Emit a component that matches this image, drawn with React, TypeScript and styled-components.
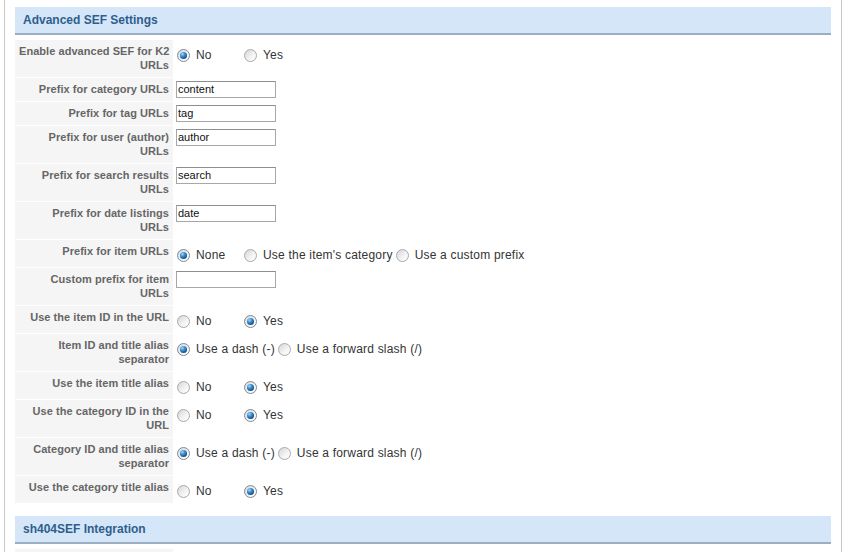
import React from "react";
import styled, { createGlobalStyle } from "styled-components";

const GlobalStyle = createGlobalStyle`
  html, body { margin: 0; padding: 0; background: #ffffff; }
  body { font-family: "Liberation Sans", Arial, sans-serif; }
`;

const Page = styled.div`
  margin-left: 4px;
  min-height: 552px;
  border-left: 1px solid #c9c9c9;
  border-right: 1px solid #c9c9c9;
  padding: 7px 10px 0 10px;
  box-sizing: content-box;
  width: 816px;
`;

const SectionHeader = styled.div<{ $gapBefore: number; $gapAfter: number }>`
  height: 26px;
  background: #d5e6f8;
  border-bottom: 2px solid #9caec2;
  display: flex;
  align-items: center;
  padding-left: 8px;
  font-size: 12px;
  font-weight: bold;
  color: #2e5e8d;
  margin-top: ${(p) => p.$gapBefore}px;
  margin-bottom: ${(p) => p.$gapAfter}px;
`;

const Rows = styled.div`
  display: flex;
  flex-direction: column;
  gap: 1px;
`;

const Row = styled.div`
  display: grid;
  grid-template-columns: 158px 1fr;
  column-gap: 1px;
`;

const Label = styled.div`
  background: #f5f5f5;
  padding: 4px 4px 5px 4px;
  min-height: 14px;
  text-align: right;
  font-size: 11px;
  line-height: 14px;
  font-weight: bold;
  color: #666666;
  white-space: nowrap;
  letter-spacing: 0.05px;
`;

const Value = styled.div<{ $kind: "input" | "radio" }>`
  padding: ${(p) => (p.$kind === "input" ? "3px 0 3px 2px" : "8px 0 5px 3px")};
  display: flex;
  align-items: flex-start;
`;

const TextBox = styled.div`
  width: 97px;
  height: 15px;
  border: 1px solid #a7a7a7;
  border-top-color: #8e8e8e;
  background: #fff;
  font-size: 11px;
  line-height: 15px;
  padding-left: 1px;
  color: #111;
`;

const Option = styled.div<{ $first: boolean }>`
  display: flex;
  align-items: center;
  height: 14px;
  margin-left: ${(p) => (p.$first ? 0 : 3)}px;
`;

const RadioDot = styled.span<{ $checked: boolean }>`
  width: 11px;
  height: 11px;
  border-radius: 50%;
  border: 1px solid ${(p) => (p.$checked ? "#7d8a96" : "#a9a9a9")};
  background: linear-gradient(135deg, #d6d6d6 0%, #f4f4f4 60%, #ffffff 100%);
  position: relative;
  flex: none;
  margin-right: 6px;
  &::after {
    content: "";
    display: ${(p) => (p.$checked ? "block" : "none")};
    position: absolute;
    left: 2px;
    top: 2px;
    width: 7px;
    height: 7px;
    border-radius: 50%;
    background: radial-gradient(circle at 35% 30%, #9fd8ff 0%, #3a8fd0 35%, #0f4c86 75%, #0b3a68 100%);
  }
`;

const OptionText = styled.span`
  font-size: 12px;
  line-height: 14px;
  color: #333333;
  min-width: 45px;
  white-space: nowrap;
  letter-spacing: 0.2px;
`;

type RowDef =
  | { label: string[]; kind: "input"; value: string }
  | { label: string[]; kind: "radio"; options: string[]; checked: number };

const rows: RowDef[] = [
  { label: ["Enable advanced SEF for K2", "URLs"], kind: "radio", options: ["No", "Yes"], checked: 0 },
  { label: ["Prefix for category URLs"], kind: "input", value: "content" },
  { label: ["Prefix for tag URLs"], kind: "input", value: "tag" },
  { label: ["Prefix for user (author)", "URLs"], kind: "input", value: "author" },
  { label: ["Prefix for search results", "URLs"], kind: "input", value: "search" },
  { label: ["Prefix for date listings", "URLs"], kind: "input", value: "date" },
  {
    label: ["Prefix for item URLs"],
    kind: "radio",
    options: ["None", "Use the item's category", "Use a custom prefix"],
    checked: 0,
  },
  { label: ["Custom prefix for item", "URLs"], kind: "input", value: "" },
  { label: ["Use the item ID in the URL"], kind: "radio", options: ["No", "Yes"], checked: 1 },
  {
    label: ["Item ID and title alias", "separator"],
    kind: "radio",
    options: ["Use a dash (-)", "Use a forward slash (/)"],
    checked: 0,
  },
  { label: ["Use the item title alias"], kind: "radio", options: ["No", "Yes"], checked: 1 },
  { label: ["Use the category ID in the", "URL"], kind: "radio", options: ["No", "Yes"], checked: 1 },
  {
    label: ["Category ID and title alias", "separator"],
    kind: "radio",
    options: ["Use a dash (-)", "Use a forward slash (/)"],
    checked: 0,
  },
  { label: ["Use the category title alias"], kind: "radio", options: ["No", "Yes"], checked: 1 },
];

const SecondRows = styled.div`
  margin-top: 5px;
`;

const FieldLabel: React.FC<{ lines: string[] }> = ({ lines }) => (
  <Label>
    {lines.map((l, i) => (
      <React.Fragment key={i}>
        {i > 0 && <br />}
        {l}
      </React.Fragment>
    ))}
  </Label>
);

const SettingRow: React.FC<{ def: RowDef }> = ({ def }) => (
  <Row>
    <FieldLabel lines={def.label} />
    {def.kind === "input" ? (
      <Value $kind="input">
        <TextBox>{def.value}</TextBox>
      </Value>
    ) : (
      <Value $kind="radio">
        {def.options.map((o, i) => (
          <Option key={o} $first={i === 0}>
            <RadioDot $checked={i === def.checked} />
            <OptionText>{o}</OptionText>
          </Option>
        ))}
      </Value>
    )}
  </Row>
);

export default function App() {
  return (
    <>
      <GlobalStyle />
      <Page>
        <SectionHeader $gapBefore={0} $gapAfter={5}>
          Advanced SEF Settings
        </SectionHeader>
        <Rows>
          {rows.map((r, i) => (
            <SettingRow key={i} def={r} />
          ))}
        </Rows>
        <SectionHeader $gapBefore={13} $gapAfter={0}>
          sh404SEF Integration
        </SectionHeader>
        <SecondRows>
          <Row>
            <FieldLabel lines={[]} />
            <Value $kind="radio" />
          </Row>
        </SecondRows>
      </Page>
    </>
  );
}
